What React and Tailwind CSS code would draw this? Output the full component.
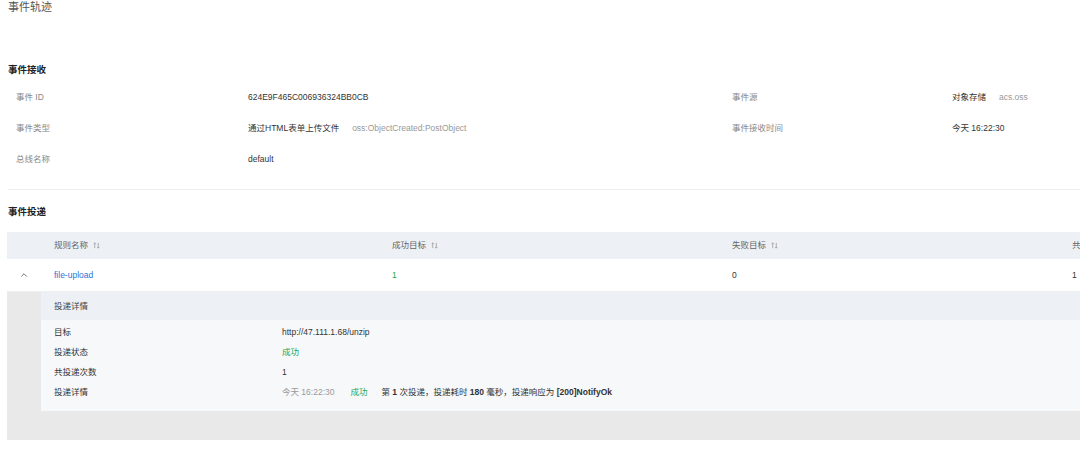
import { ChevronUp } from 'lucide-react';

const SortIcon = () => (
  <svg width="7" height="7" viewBox="0 0 8 8" className="ml-[5px] inline-block text-[#999]" fill="none" stroke="currentColor" strokeWidth="0.9">
    <path d="M2 7V1M0.8 2.2L2 1l1.2 1.2" />
    <path d="M6 1v6M4.8 5.8L6 7l1.2-1.2" />
  </svg>
);

const receiveRows = [
  { label: '事件 ID', value: '624E9F465C006936324BB0CB', rLabel: '事件源', rValue: '对象存储', rSub: 'acs.oss' },
  { label: '事件类型', value: '通过HTML表单上传文件', sub: 'oss:ObjectCreated:PostObject', rLabel: '事件接收时间', rValue: '今天 16:22:30' },
  { label: '总线名称', value: 'default' },
];

const App = () => {
  return (
    <div
      className="w-[1080px] h-[455px] overflow-hidden bg-white text-[8.5px] text-[#333]"
      style={{ fontFamily: '"Liberation Sans", "Noto Sans CJK SC", sans-serif' }}
    >
      <div className="px-2 h-[14px] leading-[14px] text-[11px] text-[#555]">事件轨迹</div>

      {/* 事件接收 */}
      <div className="mt-[49px] px-2 h-[14px] leading-[14px] text-[9.5px] font-bold text-[#222]">事件接收</div>
      <div className="mt-[5px]">
        {receiveRows.map((row) => (
          <div key={row.label} className="flex items-center h-[31px]">
            <div className="w-[248px] pl-4 text-[#888]">{row.label}</div>
            <div className="w-[484px] flex items-center">
              <span>{row.value}</span>
              {row.sub && <span className="ml-[13px] text-[#999]">{row.sub}</span>}
            </div>
            <div className="w-[220px] text-[#888]">{row.rLabel}</div>
            <div className="flex items-center">
              <span>{row.rValue}</span>
              {row.rSub && <span className="ml-[13px] text-[#999]">{row.rSub}</span>}
            </div>
          </div>
        ))}
      </div>
      <div className="mt-[14px] ml-2 border-t border-[#eeeeee]" />

      {/* 事件投递 */}
      <div className="mt-[15px] px-2 h-[14px] leading-[14px] text-[9.5px] font-bold text-[#222]">事件投递</div>
      <div className="mt-[13px] ml-[7px] w-[1200px]">
        <div className="flex items-center h-[27px] bg-[#edf0f5] text-[#666]">
          <div className="w-[34px]" />
          <div className="w-[351px] pl-[13px] flex items-center">规则名称<SortIcon /></div>
          <div className="w-[340px] flex items-center">成功目标<SortIcon /></div>
          <div className="w-[340px] flex items-center">失败目标<SortIcon /></div>
          <div className="flex items-center">共投递次数<SortIcon /></div>
        </div>
        <div className="flex items-center h-[33px] bg-white border-b border-[#f0f0f0]">
          <div className="w-[34px] flex justify-center">
            <ChevronUp className="w-[10px] h-[10px] text-[#555]" strokeWidth={2} />
          </div>
          <div className="w-[351px] pl-[13px] text-[#2b72d6]">file-upload</div>
          <div className="w-[340px] text-[#22a655]">1</div>
          <div className="w-[340px]">0</div>
          <div>1</div>
        </div>

        {/* expanded detail */}
        <div className="bg-[#e9e9e9] pl-[34px] pb-[29px]">
          <div className="bg-[#f7f8fa]">
            <div className="flex items-center h-[28px] bg-[#edf0f5] pl-[13px] text-[#444]">投递详情</div>
            <div className="pt-[2px] pb-[9px]">
              <div className="flex items-center h-[20px] pl-[13px]">
                <div className="w-[228px]">目标</div>
                <div>http://47.111.1.68/unzip</div>
              </div>
              <div className="flex items-center h-[20px] pl-[13px]">
                <div className="w-[228px]">投递状态</div>
                <div className="text-[#22a655]">成功</div>
              </div>
              <div className="flex items-center h-[20px] pl-[13px]">
                <div className="w-[228px]">共投递次数</div>
                <div>1</div>
              </div>
              <div className="flex items-center h-[20px] pl-[13px]">
                <div className="w-[228px]">投递详情</div>
                <div className="flex items-center">
                  <span className="text-[#999]">今天 16:22:30</span>
                  <span className="ml-[16px] text-[#22a655]">成功</span>
                  <span className="ml-[14px]">
                    第 <b>1</b> 次投递，投递耗时 <b>180</b> 毫秒，投递响应为 <b>[200]NotifyOk</b>
                  </span>
                </div>
              </div>
            </div>
          </div>
        </div>
      </div>
    </div>
  );
};

export default App;
